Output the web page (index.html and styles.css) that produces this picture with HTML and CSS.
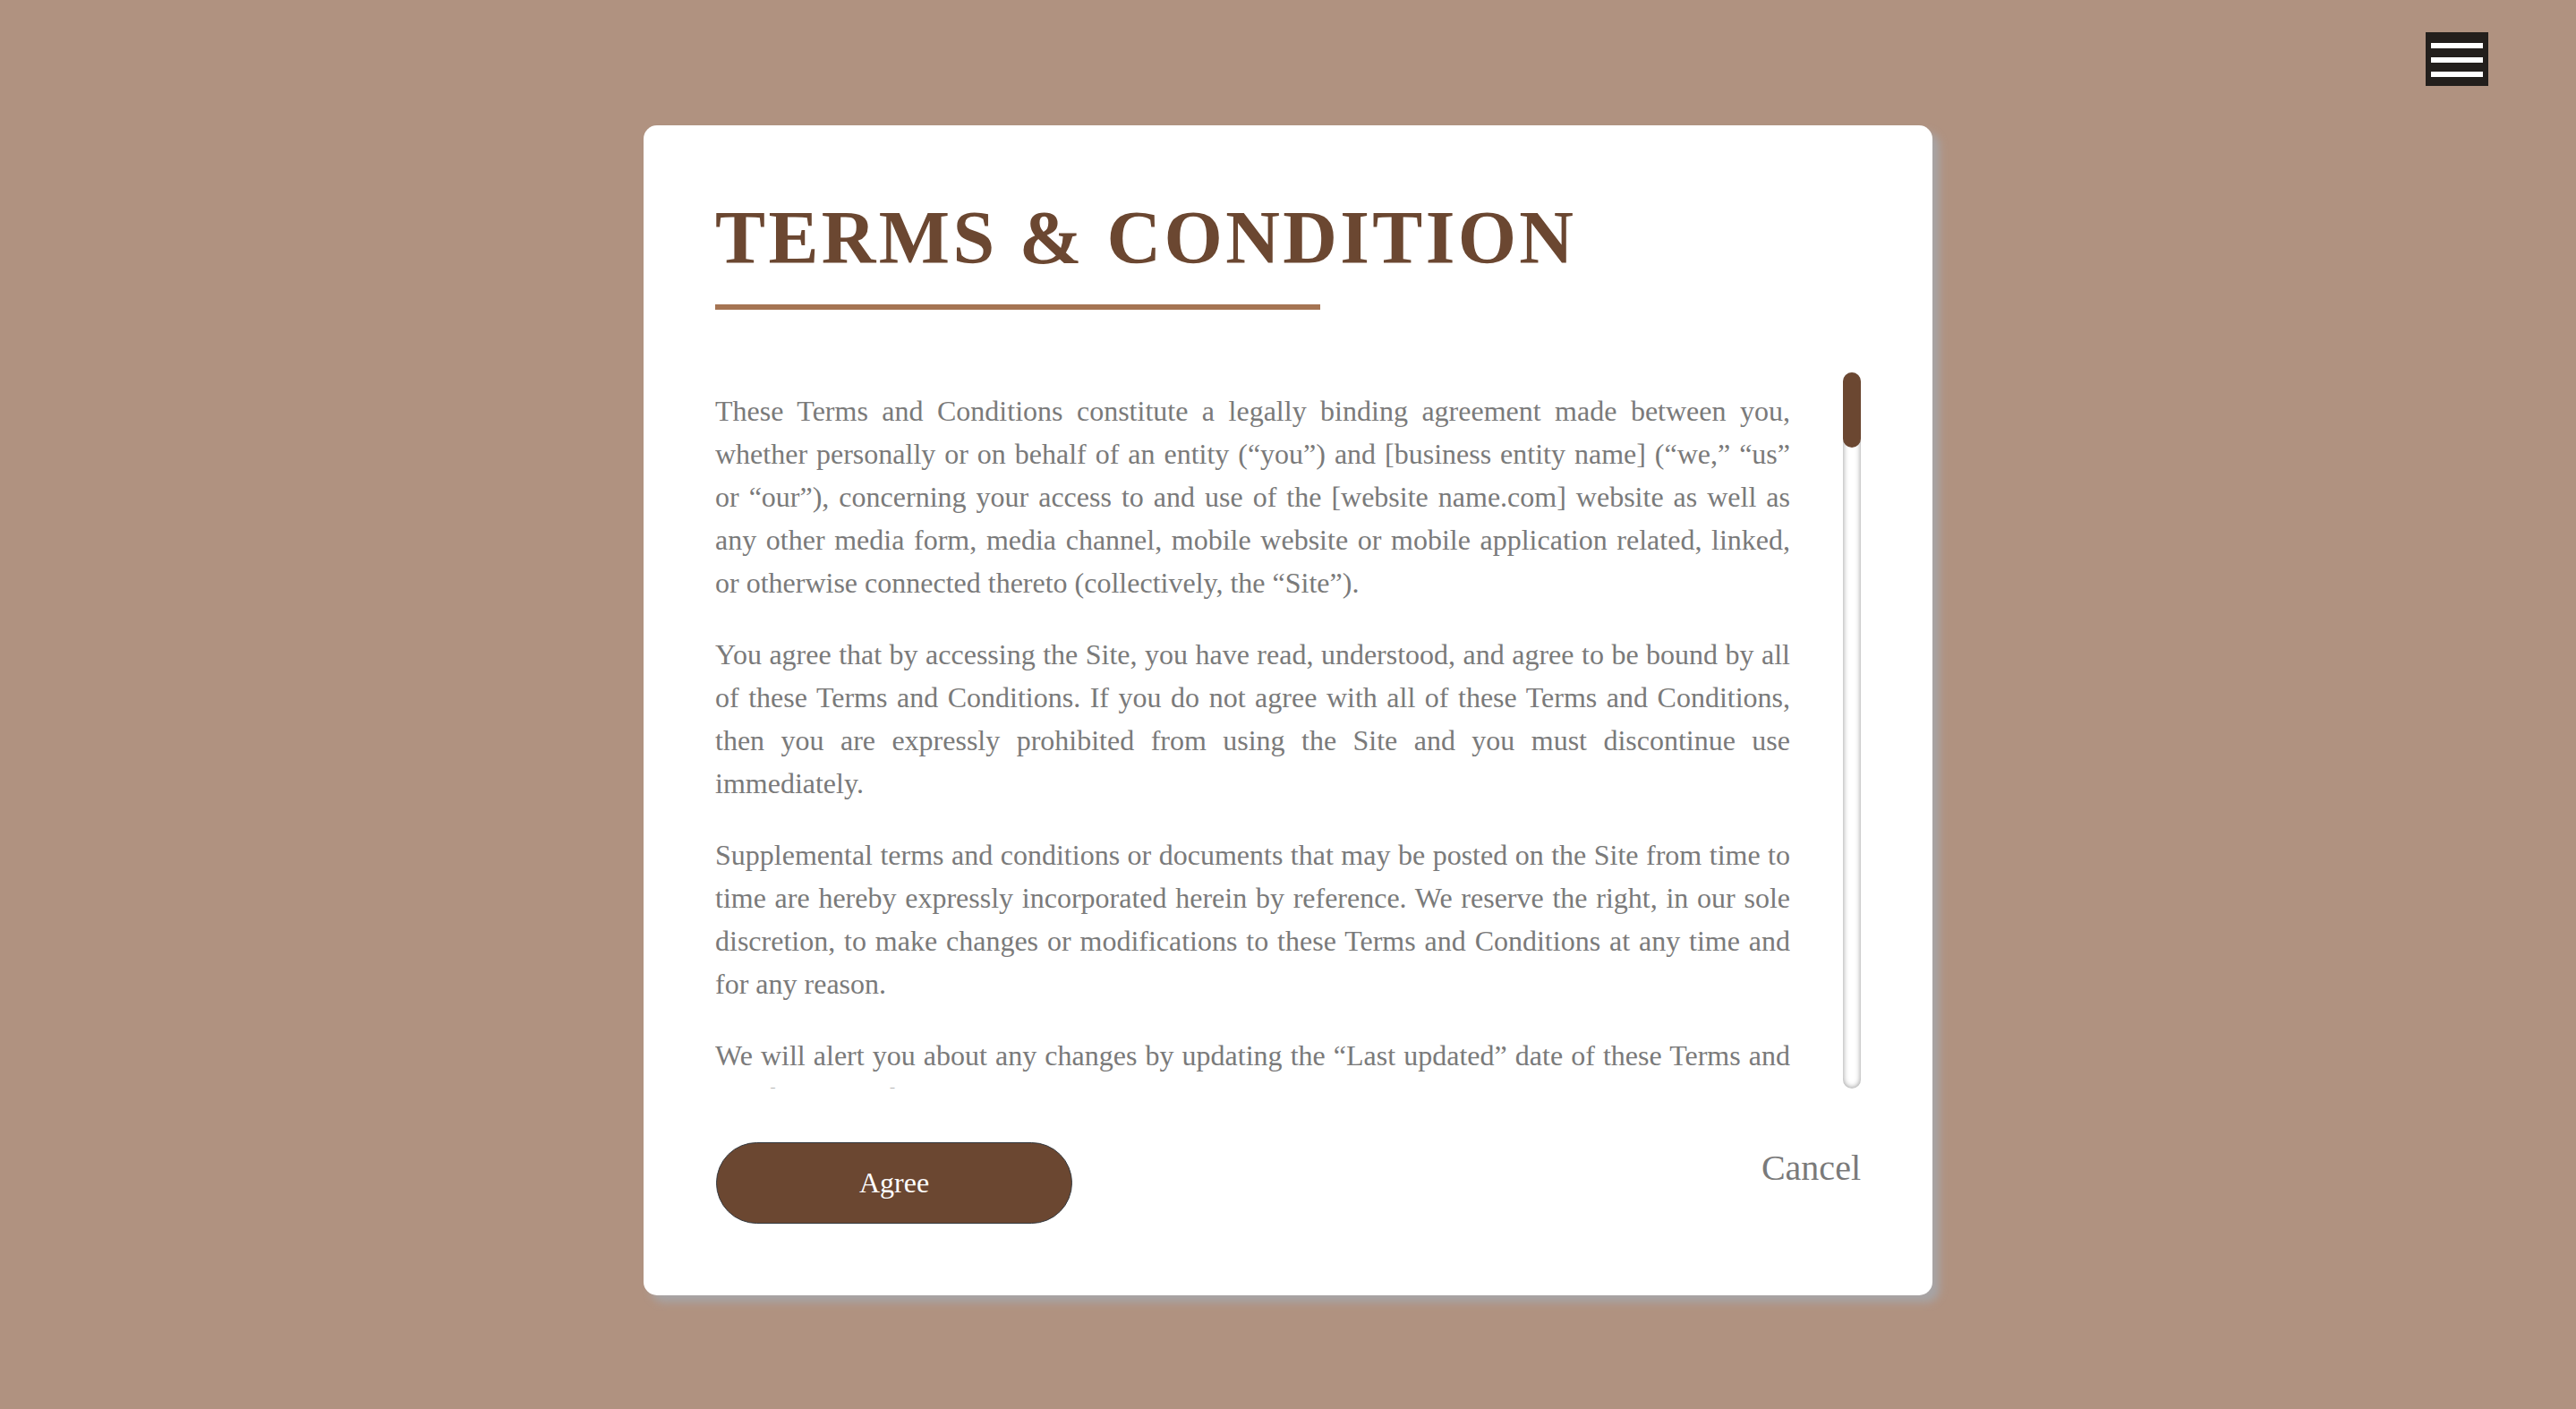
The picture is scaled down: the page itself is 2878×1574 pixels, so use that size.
FILE: index.html
```html
<!DOCTYPE html>
<html lang="en">
<head>
<meta charset="utf-8">
<title>Terms &amp; Condition</title>
<link rel="stylesheet" href="styles.css">
</head>
<body>
<button class="menu" aria-label="Menu">
  <span class="menu-bar"></span>
  <span class="menu-bar"></span>
  <span class="menu-bar"></span>
</button>
<main class="page">
  <section class="modal">
    <h1 class="title">TERMS &amp; CONDITION</h1>
    <div class="rule"></div>
    <div class="terms">
      <div class="terms-body">
        <p>These Terms and Conditions constitute a legally binding agreement made between you, whether personally or on behalf of an entity (“you”) and [business entity name] (“we,” “us” or “our”), concerning your access to and use of the [website name.com] website as well as any other media form, media channel, mobile website or mobile application related, linked, or otherwise connected thereto (collectively, the “Site”).</p>
        <p>You agree that by accessing the Site, you have read, understood, and agree to be bound by all of these Terms and Conditions. If you do not agree with all of these Terms and Conditions, then you are expressly prohibited from using the Site and you must discontinue use immediately.</p>
        <p>Supplemental terms and conditions or documents that may be posted on the Site from time to time are hereby expressly incorporated herein by reference. We reserve the right, in our sole discretion, to make changes or modifications to these Terms and Conditions at any time and for any reason.</p>
        <p>We will alert you about any changes by updating the “Last updated” date of these Terms and Conditions, and you waive any right to receive specific notice of each such change.</p>
        <p>It is your responsibility to periodically review these Terms and Conditions to stay informed of updates. You will be subject to, and will be deemed to have been made aware of and to have accepted, the changes in any revised Terms and Conditions by your continued use of the Site after the date such revised Terms are posted.</p>
        <p>The information provided on the Site is not intended for distribution to or use by any person or entity in any jurisdiction or country where such distribution or use would be contrary to law or regulation or which would subject us to any registration requirement within such jurisdiction or country.</p>
      </div>
      <div class="scrollbar" aria-hidden="true">
        <div class="scrollbar-thumb"></div>
      </div>
    </div>
    <div class="actions">
      <button class="btn-agree">Agree</button>
      <button class="btn-cancel">Cancel</button>
    </div>
  </section>
</main>
</body>
</html>
```

FILE: styles.css
```css
html, body {
  margin: 0;
  padding: 0;
}

body {
  background: #b09280;
  min-height: 100vh;
  font-family: "Liberation Serif", "Times New Roman", serif;
}

.menu {
  position: fixed;
  top: 36px;
  right: 98px;
  width: 70px;
  height: 60px;
  margin: 0;
  padding: 12px 6px 0;
  box-sizing: border-box;
  background: #231f1c;
  border: none;
  display: flex;
  flex-direction: column;
  gap: 10px;
  cursor: pointer;
}

.menu-bar {
  display: block;
  width: 58px;
  height: 6px;
  background: #ffffff;
}

.page {
  padding-top: 140px;
}

.modal {
  width: 1440px;
  margin: 0 auto;
  box-sizing: border-box;
  padding: 84px 80px 80px;
  background: #ffffff;
  border-radius: 15px;
  box-shadow: 8px 8px 10px #a7a4a5;
}

.title {
  margin: 0;
  font-family: "Liberation Serif", "Times New Roman", serif;
  font-size: 84px;
  line-height: 84px;
  font-weight: 700;
  letter-spacing: 3.35px;
  color: #6b4731;
}

.rule {
  width: 676px;
  height: 6px;
  margin-top: 32px;
  background: #a57453;
}

.terms {
  margin-top: 70px;
  height: 800px;
  display: flex;
  gap: 59px;
}

.terms-body {
  flex: 1;
  min-width: 0;
  overflow: hidden;
  padding-top: 19px;
}

.terms-body p {
  margin: 0 0 32px;
  font-size: 32px;
  line-height: 48px;
  color: #7a7a7a;
  text-align: justify;
}

.scrollbar {
  flex: 0 0 20px;
  border-radius: 10px;
  box-shadow: inset 0 0 6px #8f8f8f;
}

.scrollbar-thumb {
  height: 84px;
  background: #6b4731;
  border-radius: 10px;
}

.actions {
  margin-top: 60px;
  padding-left: 1px;
  display: flex;
  justify-content: space-between;
  align-items: flex-start;
}

.btn-agree {
  width: 398px;
  height: 91px;
  border-radius: 46px;
  border: 1.5px solid #343a40;
  background: #6b4731;
  color: #ffffff;
  font-family: "Liberation Serif", "Times New Roman", serif;
  font-size: 32px;
  cursor: pointer;
}

.btn-cancel {
  margin: 0;
  padding: 6px 0 0;
  border: none;
  background: none;
  color: #7a7a7a;
  font-family: "Liberation Serif", "Times New Roman", serif;
  font-size: 40px;
  line-height: 46px;
  cursor: pointer;
}
```
